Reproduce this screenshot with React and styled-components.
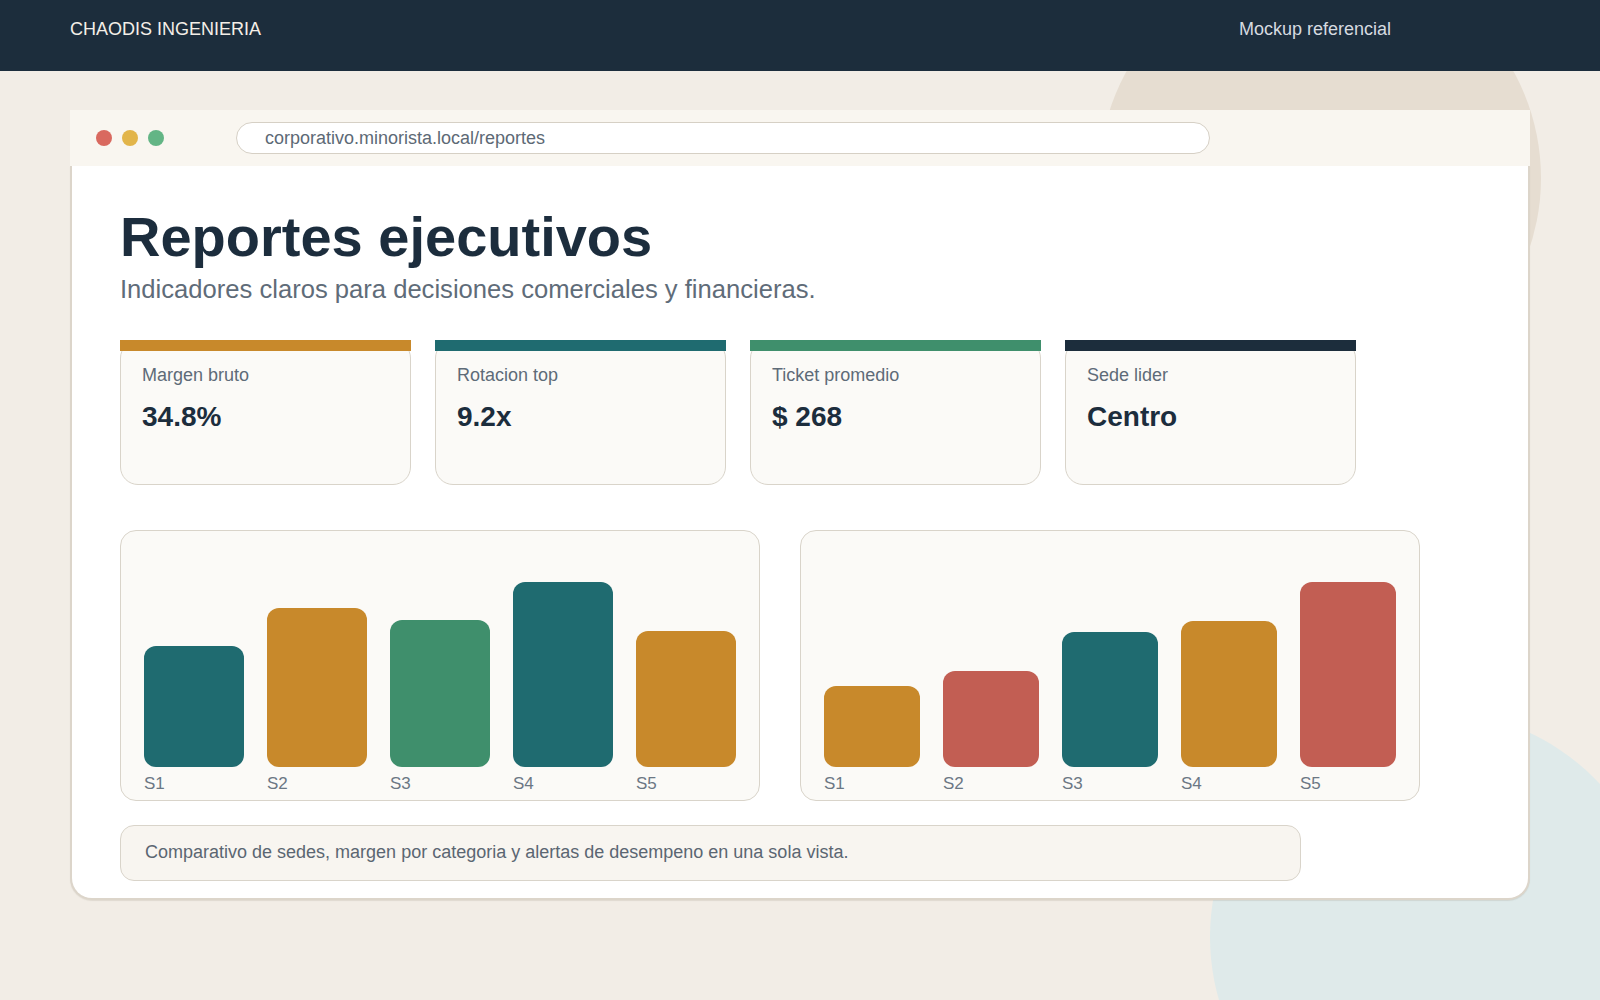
import React from "react";
import styled, { createGlobalStyle } from "styled-components";

const colors = {
  navy: "#1c2d3c",
  teal: "#1f6b70",
  orange: "#c8892b",
  green: "#3f8f6c",
  red: "#c25e53",
};

const kpis = [
  { label: "Margen bruto", value: "34.8%", color: colors.orange },
  { label: "Rotacion top", value: "9.2x", color: colors.teal },
  { label: "Ticket promedio", value: "$ 268", color: colors.green },
  { label: "Sede lider", value: "Centro", color: colors.navy },
];

const charts = [
  {
    width: 640,
    bars: [
      { h: 55, color: colors.teal },
      { h: 72, color: colors.orange },
      { h: 66.5, color: colors.green },
      { h: 84, color: colors.teal },
      { h: 61.5, color: colors.orange },
    ],
  },
  {
    width: 620,
    bars: [
      { h: 36.5, color: colors.orange },
      { h: 43.6, color: colors.red },
      { h: 61, color: colors.teal },
      { h: 66, color: colors.orange },
      { h: 84, color: colors.red },
    ],
  },
];

const App = () => {
  return (
    <Page>
      <GlobalStyle />
      <Blob $tone="sand" />
      <Blob $tone="mist" />

      <TopBar>
        <span>CHAODIS INGENIERIA</span>
        <TopNote>Mockup referencial</TopNote>
      </TopBar>

      <BrowserWindow>
        <Toolbar>
          <Dots>
            <Dot $color="#d9695f" />
            <Dot $color="#e2b54a" />
            <Dot $color="#63b585" />
          </Dots>
          <UrlBar>corporativo.minorista.local/reportes</UrlBar>
        </Toolbar>

        <Body>
          <Title>Reportes ejecutivos</Title>
          <Subtitle>Indicadores claros para decisiones comerciales y financieras.</Subtitle>

          <KpiGrid>
            {kpis.map((k) => (
              <KpiCard key={k.label} $accent={k.color}>
                <KpiLabel>{k.label}</KpiLabel>
                <KpiValue>{k.value}</KpiValue>
              </KpiCard>
            ))}
          </KpiGrid>

          <ChartGrid>
            {charts.map((chart, ci) => (
              <ChartCard key={`chart-${ci}`} $width={chart.width}>
                {chart.bars.map((b, i) => (
                  <BarColumn key={`bar-${ci}-${i}`}>
                    <BarTrack>
                      <Bar $color={b.color} style={{ height: `${b.h}%` }} />
                    </BarTrack>
                    <BarLabel>S{i + 1}</BarLabel>
                  </BarColumn>
                ))}
              </ChartCard>
            ))}
          </ChartGrid>

          <Note>
            Comparativo de sedes, margen por categoria y alertas de desempeno en una sola vista.
          </Note>
        </Body>
      </BrowserWindow>
    </Page>
  );
};

const GlobalStyle = createGlobalStyle`
  * {
    box-sizing: border-box;
  }
  body {
    margin: 0;
    background: #f2ede6;
    font-family: "Liberation Sans", Arial, sans-serif;
  }
`;

const Page = styled.div`
  position: relative;
  min-height: 100vh;
  overflow: hidden;
`;

// decorative circles behind the mockup
const Blob = styled.div`
  position: absolute;
  border-radius: 50%;
  z-index: 0;
  ${(p) =>
    p.$tone === "sand"
      ? `
    width: 442px;
    height: 442px;
    top: -43px;
    right: 59px;
    background: #e6ddd1;
  `
      : `
    width: 450px;
    height: 450px;
    top: 712px;
    right: -60px;
    background: #dfeaea;
  `}
`;

const TopBar = styled.header`
  position: relative;
  z-index: 2;
  height: 71px;
  background: #1c2d3c;
  color: #f4efe8;
  font-size: 18px;
  display: flex;
  justify-content: space-between;
  align-items: flex-start;
  padding: 19px 209px 0 70px;
`;

const TopNote = styled.span`
  color: #d6dbe0;
`;

const BrowserWindow = styled.section`
  position: relative;
  z-index: 1;
  margin: 39px 70px 0;
  display: flex;
  flex-direction: column;
`;

const Toolbar = styled.div`
  height: 56px;
  background: #f9f6f0;
  display: flex;
  align-items: center;
  padding: 0 26px;
`;

const Dots = styled.div`
  display: flex;
  gap: 10px;
`;

const Dot = styled.span`
  width: 16px;
  height: 16px;
  border-radius: 50%;
  background: ${(p) => p.$color};
`;

const UrlBar = styled.div`
  margin-left: 72px;
  width: 974px;
  height: 32px;
  border: 1px solid #d6d0c5;
  border-radius: 16px;
  background: #fff;
  padding-left: 28px;
  display: flex;
  align-items: center;
  font-size: 18px;
  color: #5d6975;
`;

const Body = styled.div`
  background: #fff;
  border: 2px solid #dcd5ca;
  border-top: none;
  border-radius: 0 0 22px 22px;
  box-shadow: 0 1px 1px rgba(120, 105, 85, 0.15);
  padding: 40px 48px 17px;
`;

const Title = styled.h1`
  margin: 0;
  font-size: 56px;
  line-height: 1.1;
  font-weight: 700;
  color: #1c2d3d;
`;

const Subtitle = styled.p`
  margin: 7px 0 0;
  font-size: 25.6px;
  color: #5f6c79;
`;

const KpiGrid = styled.div`
  margin-top: 36px;
  display: grid;
  grid-template-columns: repeat(4, 291px);
  gap: 24px;
`;

const KpiCard = styled.div`
  position: relative;
  height: 145px;
  background: #fbfaf7;
  border: 1px solid #d9d4ca;
  border-radius: 18px;
  padding: 24px 21px;

  &::before {
    content: "";
    position: absolute;
    top: -1px;
    left: -1px;
    right: -1px;
    height: 11px;
    background: ${(p) => p.$accent};
  }
`;

const KpiLabel = styled.div`
  font-size: 18px;
  color: #5e6b78;
`;

const KpiValue = styled.div`
  margin-top: 15px;
  font-size: 28px;
  font-weight: 700;
  color: #1c2d3d;
`;

const ChartGrid = styled.div`
  margin-top: 45px;
  display: flex;
  gap: 40px;
`;

const ChartCard = styled.div`
  width: ${(p) => p.$width}px;
  height: 271px;
  background: #fbfaf7;
  border: 1px solid #d9d4ca;
  border-radius: 16px;
  padding: 16px 23px 8px;
  display: grid;
  grid-template-columns: repeat(5, 1fr);
  gap: 23px;
`;

const BarColumn = styled.div`
  display: flex;
  flex-direction: column;
`;

const BarTrack = styled.div`
  height: 220px;
  display: flex;
  align-items: flex-end;
`;

const Bar = styled.div`
  width: 100%;
  border-radius: 12px;
  background: ${(p) => p.$color};
`;

const BarLabel = styled.div`
  margin-top: 7px;
  font-size: 17px;
  color: #6b7784;
`;

const Note = styled.div`
  margin-top: 24px;
  width: 1181px;
  height: 56px;
  background: #f8f5f0;
  border: 1px solid #d9d4ca;
  border-radius: 14px;
  padding: 0 24px;
  display: flex;
  align-items: center;
  font-size: 18px;
  color: #5b6672;
`;

export default App;
